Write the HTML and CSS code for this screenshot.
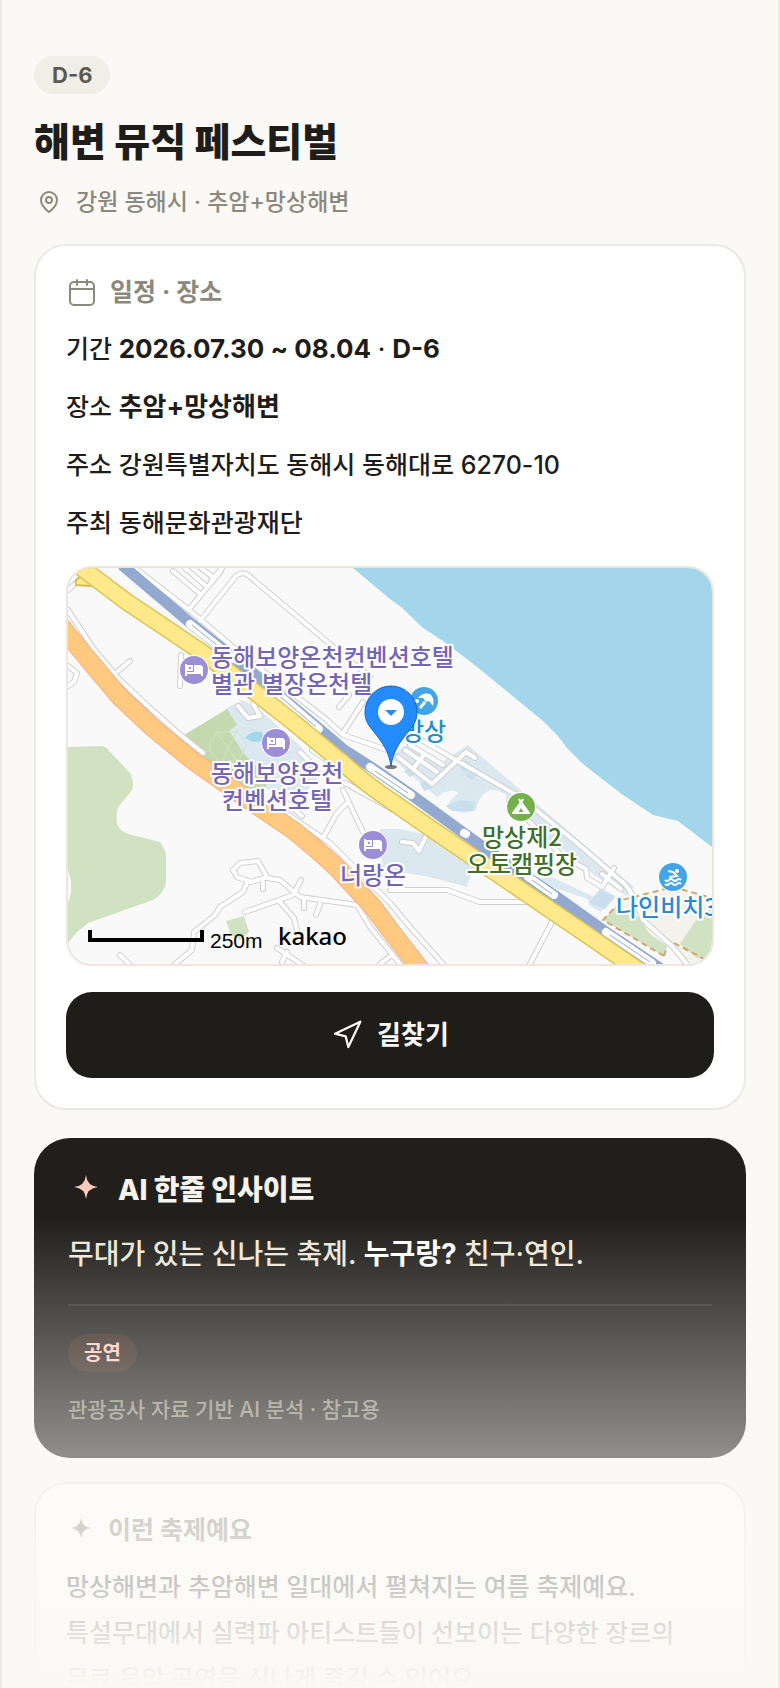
FILE: index.html
```html
<!DOCTYPE html>
<html lang="ko">
<head>
    <meta charset="UTF-8">
    <meta name="viewport" content="width=device-width, initial-scale=1.0">
    <title>해변 뮤직 페스티벌</title>
    <link rel="stylesheet" href="styles.css">
</head>
<body>

    <main class="page">
        <header class="intro">
            <span class="dday">D-6</span>
            <h1>해변 뮤직 페스티벌</h1>
            <p class="region">
                <svg class="icon-sm" viewBox="-3 -3 30 30" fill="none" stroke="currentColor" stroke-width="2">
                    <path d="M20 10c0 5-4.500 9.300-7.300 11.600a1 1 0 0 1-1.400 0C8.500 19.300 4 15 4 10a8 8 0 0 1 16 0z"/>
                    <circle cx="12" cy="10" r="3"/>
                </svg>
                강원 동해시 · 추암+망상해변
            </p>
        </header>

        <section class="card">
            <h2>
                <svg class="icon-md" viewBox="0 0 32 32" fill="none" stroke="currentColor" stroke-width="2" stroke-linecap="round">
                    <rect x="4" y="6" width="24" height="23" rx="4"/>
                    <path d="M4 13h24M11 4v5M21 4v5"/>
                </svg>
                일정 · 장소
            </h2>
            <ul class="facts">
                <li>기간 <b>2026.07.30 ~ 08.04</b> · <b>D-6</b></li>
                <li>장소 <b>추암+망상해변</b></li>
                <li>주소 강원특별자치도 동해시 동해대로 6270-10</li>
                <li>주최 동해문화관광재단</li>
            </ul>

            <div class="map">
                <svg viewBox="68 568 644 396" preserveAspectRatio="xMidYMid slice" role="img" aria-label="지도">
                    <rect x="68" y="568" width="644" height="396" fill="#f9f9f9"/>

                    <!-- sea -->
                    <path fill="#a3d6eb" d="M353 568L390 599 401 607 423 628 443 641 467 659 487 675 543 721 557 735 567 748 582 763 597 775 623 795 653 815 678 821 712 847V568z"/>

                    <!-- parks -->
                    <path fill="#d1e2c2" d="M68 747L102 746Q107 747 110 752L130 773Q135 781 132 790L119 806Q114 817 119 828 123 833 132 835L160 842 166 853V883Q162 896 153 900L88 923 77 932 68 943V903L71 893V880L68 870z"/>
                    <path fill="#d1e2c2" d="M226 921L244 916 249 932 240 940 231 935z"/>
                    <path fill="#dbe8f0" d="M225 709L243 700 262 712 300 746 322 772 300 800 268 790 228 732z"/>
                    <path fill="#c4d9ae" d="M184 735L227 709 237 725 229 731 245 755 268 778 264 796 235 782 205 758z"/>
                    <path fill="none" stroke="#d4e4c4" stroke-width="1" d="M210 742l7-9 20-2 10 14-8 14-18 4-11-12zM217 733l20 28M237 731l-16 32"/>
                    <path fill="#a3d6eb" d="M245 738Q251 730 262 732L265 741 253 742z"/>

                    <!-- camp ground and parking blocks -->
                    <path fill="#dbe8f0" d="M390 757L407 745 440 763 468 745 634 887 626 896 594 875 530 822 516 815 506 806V795Q495 787 486 792 478 798 476 810 465 816 449 809 444 804 459 793 450 787 437 797 424 801L388 776z"/>
                    <path fill="#c9dfed" d="M446 806L461 800 476 802 473 811 452 811zM458 764l9-4 6 8-9 5zM466 775l6-5 5 5-6 5zM404 771l8-4 6 6-8 4zM420 783l9-3 3 8-8 3z"/>
                    <path fill="#dbe8f0" d="M380 829L400 829 423 834 473 866 467 887 430 877 400 872 382 869z"/>
                    <path fill="#dbe8f0" d="M518 876L552 877 594 897 600 888 615 896 601 912 589 905 588 899 545 885z"/>
                    <path fill="#c9dfed" d="M594 896L602 889 615 897 605 909 590 903z"/>
                    <path fill="#f3f2ec" d="M617 905L673 889 712 899V964H690L650 930z"/>
                    <path fill="#d1e2c2" d="M603 920L616 906 638 917 650 934 667 946 664 956zM680 944L700 914 712 905V960L697 958z"/>
                    <path fill="none" stroke="#cba878" stroke-width="2" stroke-dasharray="6 4" d="M664 956L603 920 622 900 673 887 712 898M664 956l3-9M674 943L706 960"/>

                    <!-- small streets, grey casing first -->
                    <g fill="none" stroke="#cfcfcf" stroke-width="6" stroke-linecap="round" stroke-linejoin="round">
                        <path id="streets" d="M200 621L236 576Q242 571 248 575L337 650 370 677M135 568L193 613 240 653 327 720 343 735 390 751M343 733L363 702M339 707L349 695M68 590L82 578M180 686L181 655M118 671L130 661M173 571L200 594M185 568L206 586M201 568L214 578M211 581L222 568M191 607L221 571
                        M68 610L93 648 120 680 150 708 177 732 203 753M283 810L293 818 330 843 357 870 390 903 410 927 443 964
                        M68 666l9 7-3 9-6 4M238 706l10 12 12-2-7-12 14-2 14 12M300 752l10 10-8 12M312 750l18 12"/>
                        <path id="lanes" d="M343 790L363 832M345 783L392 809M347 803L337 813 323 838M288 804L302 816M233 870L240 863 258 861 267 877 251 882 237 877zM247 883L243 892 220 907 215 915 194 932 192 950 175 964M267 878L280 880 300 897 357 905 370 927 400 964M245 912L293 895 301 880M280 902L294 918 297 930M304 899v9M320 904l-4 11M263 882v7M120 955l10 10M277 948l30 20M287 952l-5 10M380 964l12-9
                        M390 890L447 890 480 902H533M553 920L530 964M402 842L413 843 419 851 427 834"/>
                        <path id="camproads" d="M423 741L520 797 577 843 620 880Q632 888 643 920L673 947 687 964M528 820L562 856 586 869 587 878 602 887 614 868M602 874L621 889M398 757L432 784 466 752 475 758M405 750L437 772M410 745L443 765M413 769L424 755"/>
                    </g>
                    <g fill="none" stroke="#fff" stroke-width="4" stroke-linecap="round" stroke-linejoin="round">
                        <path d="M200 621L236 576Q242 571 248 575L337 650 370 677M135 568L193 613 240 653 327 720 343 735 390 751M343 733L363 702M339 707L349 695M68 590L82 578M180 686L181 655M118 671L130 661M173 571L200 594M185 568L206 586M201 568L214 578M211 581L222 568M191 607L221 571
                        M68 610L93 648 120 680 150 708 177 732 203 753M283 810L293 818 330 843 357 870 390 903 410 927 443 964
                        M68 666l9 7-3 9-6 4M238 706l10 12 12-2-7-12 14-2 14 12M300 752l10 10-8 12M312 750l18 12"/>
                        <path d="M343 790L363 832M345 783L392 809M347 803L337 813 323 838M288 804L302 816M233 870L240 863 258 861 267 877 251 882 237 877zM247 883L243 892 220 907 215 915 194 932 192 950 175 964M267 878L280 880 300 897 357 905 370 927 400 964M245 912L293 895 301 880M280 902L294 918 297 930M304 899v9M320 904l-4 11M263 882v7M120 955l10 10M277 948l30 20M287 952l-5 10M380 964l12-9
                        M390 890L447 890 480 902H533M553 920L530 964M402 842L413 843 419 851 427 834"/>
                        <path d="M423 741L520 797 577 843 620 880Q632 888 643 920L673 947 687 964M528 820L562 856 586 869 587 878 602 887 614 868M602 874L621 889M398 757L432 784 466 752 475 758M405 750L437 772M410 745L443 765M413 769L424 755"/>
                    </g>

                    <!-- railway -->
                    <path fill="none" stroke="#94a9cf" stroke-width="11" d="M122 565L188 621 260 679 322 731 343 749 377 771 413 796 465 834 503 861 557 897 603 930 660 968"/>
                    <path fill="none" stroke="#fff" stroke-width="8" stroke-linecap="round" d="M190 624L234 659M272 689L319 729M370 767L411 795M464 833L466 834M528 877L554 895M606 932L652 963"/>
                    <path fill="none" stroke="#94a9cf" stroke-width="1" d="M192 625L234 659M276 693L316 727M375 771L408 793M532 880L552 894M610 935L650 962"/>

                    <!-- main roads -->
                    <path fill="#ffe98b" stroke="#d5c054" stroke-width="2" d="M94 577L80 577Q74 580 76 585L104 587"/>
                    <path fill="none" stroke="#d9c55a" stroke-width="18" stroke-linejoin="round" d="M74 562L127 602 157 622 203 653 247 686 293 722 345 765Q367 785 390 800L433 830 480 862 530 896 577 928 638 970"/>
                    <path fill="none" stroke="#ffe98b" stroke-width="15" stroke-linejoin="round" d="M74 562L127 602 157 622 203 653 247 686 293 722 345 765Q367 785 390 800L433 830 480 862 530 896 577 928 638 970"/>
                    <path fill="none" stroke="#f2ae88" stroke-width="19" stroke-linejoin="round" d="M58 622L68 635 93 665 120 697 153 728 192 760 243 796 293 830Q318 850 337 868L373 907 390 930 425 975"/>
                    <path fill="none" stroke="#ffc97f" stroke-width="17" stroke-linejoin="round" d="M58 622L68 635 93 665 120 697 153 728 192 760 243 796 293 830Q318 850 337 868L373 907 390 930 425 975"/>

                    <!-- places -->
                    <g id="hotel">
                        <circle cx="194" cy="670" r="15" fill="#fff"/>
                        <circle cx="194" cy="670" r="14" fill="#9b8dd6"/>
                        <path fill="none" stroke="#fff" stroke-width="2" d="M186 664V676M186 673H202M202 668V676M188 666h4v4h-4z"/>
                        <path fill="#fff" d="M194 665h7l2 2v6h-9z"/>
                    </g>
                    <use href="#hotel" x="82" y="73"/>
                    <use href="#hotel" x="179" y="175"/>

                    <circle cx="424" cy="701" r="15" fill="#fff"/>
                    <circle cx="424" cy="701" r="14" fill="#41a5e7"/>
                    <path fill="#fff" d="M418 698Q423 692 430 694 435 698 433 706L429 701 426 702 423 698z"/>
                    <path stroke="#fff" stroke-width="3" d="M425 702L420 708"/>
                    <circle cx="417" cy="701" r="2" fill="#fff"/>

                    <circle cx="521" cy="807" r="15" fill="#fff"/>
                    <circle cx="521" cy="807" r="14" fill="#74b04c"/>
                    <path fill="none" stroke="#fff" stroke-width="2" stroke-linejoin="round" d="M519 799L521 803 523 799M521 802L513 813H529z"/>
                    <path fill="#fff" fill-rule="evenodd" d="M521 802L530 814H512zM521 808L518 813H524z"/>

                    <circle cx="673" cy="877" r="15" fill="#fff"/>
                    <circle cx="673" cy="877" r="14" fill="#41a5e7"/>
                    <path fill="none" stroke="#fff" stroke-width="2" d="M668 871L673 872 677 876 669 877M665 880q2 2 4 0t4 0 4 0 4 0M665 884q2 2 4 0t4 0 4 0 4 0"/>
                    <circle cx="677" cy="871" r="2" fill="#fff"/>

                    <g class="place hotel">
                        <text x="211" y="666">동해보양온천컨벤션호텔</text>
                        <text x="211" y="693">별관 별장온천텔</text>
                        <text x="277" y="782" text-anchor="middle">동해보양온천</text>
                        <text x="277" y="809" text-anchor="middle">컨벤션호텔</text>
                        <text x="373" y="884" text-anchor="middle">너랑온</text>
                    </g>
                    <g class="place camp">
                        <text x="522" y="846" text-anchor="middle">망상제2</text>
                        <text x="522" y="873" text-anchor="middle">오토캠핑장</text>
                    </g>
                    <g class="place beach">
                        <text x="424" y="740" text-anchor="middle">망상</text>
                        <text x="616" y="916">나인비치3</text>
                    </g>

                    <!-- festival marker -->
                    <ellipse cx="391" cy="767" rx="6" ry="2" fill="#777"/>
                    <path fill="#238cfa" stroke="#1a62c4" stroke-width="1" d="M391 766C389 752 383 743 374 732 368 725 365 720 365 712A26 26 0 0 1 417 712C417 720 414 725 408 732 399 743 393 752 391 766z"/>
                    <circle cx="391" cy="712" r="13" fill="#fff"/>
                    <path fill="#238cfa" d="M385 710H397L391 716z"/>

                    <path fill="none" stroke="#000" stroke-width="4" d="M90 930V940H202V930"/>
                    <text class="scale" x="210" y="948">250m</text>
                    <text class="brand" x="278" y="945">kakao</text>
                </svg>
            </div>

            <button type="button" class="directions">
                <svg class="icon-md" viewBox="0 0 24 24" fill="none" stroke="currentColor" stroke-width="1.700" stroke-linejoin="round">
                    <path d="M3 11L22 2 13 21 11 13z"/>
                </svg>
                길찾기
            </button>
        </section>

        <section class="insight">
            <h2>
                <svg class="icon-lg" viewBox="0 0 36 36" fill="currentColor">
                    <path d="M18 3Q19 14 30 15 19 16 18 27 17 16 6 15 17 14 18 3z"/>
                </svg>
                AI 한줄 인사이트
            </h2>
            <p class="summary">무대가 있는 신나는 축제. <b>누구랑?</b> 친구·연인.</p>
            <div class="tags">
                <span class="tag">공연</span>
            </div>
            <p class="source">관광공사 자료 기반 AI 분석 · 참고용</p>
        </section>

        <section class="card">
            <h2>
                <svg class="icon-sm" viewBox="0 0 30 30" fill="currentColor">
                    <path d="M15 3Q16 12 25 13 16 14 15 23 14 14 5 13 14 12 15 3z"/>
                </svg>
                이런 축제예요
            </h2>
            <p class="about">망상해변과 추암해변 일대에서 펼쳐지는 여름 축제예요. 특설무대에서 실력파 아티스트들이 선보이는 다양한 장르의 무료 음악 공연을 신나게 즐길 수 있어요.</p>
        </section>

        <div class="fade"></div>
    </main>

</body>
</html>
```

FILE: styles.css
```css
* {
    box-sizing: border-box;
    margin: 0;
    padding: 0;
}

body {
    font-family: Inter, "Noto Sans CJK KR", sans-serif;
    font-size: 25px;
    font-weight: 500;
    color: #1e1d19;
    background: #faf9f5;
    word-break: keep-all;
}

b {
    font-size: 26px;
    font-weight: 700;
}

.page {
    position: relative;
    height: 100vh;
    overflow: hidden;
    padding: 56px 32px 0;
    border-left: 2px solid #ebe9e3;
    border-right: 2px solid #ebe9e3;
}

.intro {
    display: flex;
    flex-direction: column;
    align-items: flex-start;
    margin-bottom: 24px;
}

.dday {
    padding: 0 18px;
    border-radius: 19px;
    background: #f0eee7;
    color: #5c5a50;
    font-size: 22px;
    font-weight: 700;
    line-height: 38px;
}

h1 {
    margin-top: 20px;
    font-size: 39px;
    font-weight: 800;
    line-height: 56px;
}

.region {
    display: flex;
    align-items: center;
    gap: 12px;
    margin-top: 14px;
    color: #8c887c;
    font-size: 23px;
    line-height: 36px;
}

.icon-sm {
    width: 30px;
    height: 30px;
}

.icon-md {
    width: 32px;
    height: 32px;
}

.icon-lg {
    width: 36px;
    height: 36px;
}

.card {
    padding: 28px 30px 30px;
    border: 2px solid #ebe9e3;
    border-radius: 32px;
    background: #fff;
}

.card h2 {
    display: flex;
    align-items: center;
    gap: 12px;
    color: #8c887c;
    font-size: 25px;
    font-weight: 700;
    line-height: 36px;
}

.facts {
    display: flex;
    flex-direction: column;
    gap: 16px;
    margin-top: 18px;
    list-style: none;
    line-height: 42px;
}

.map {
    margin-top: 22px;
    border: 2px solid #ebe7df;
    border-radius: 26px;
    overflow: hidden;
}

.map svg {
    display: block;
    width: 100%;
}

.place {
    font-family: "Noto Sans CJK KR", sans-serif;
    font-size: 24px;
    font-weight: 500;
    stroke: #fff;
    stroke-width: 4px;
    stroke-linejoin: round;
    paint-order: stroke;
}

.hotel {
    fill: #7566b5;
}

.camp {
    fill: #41702a;
}

.beach {
    fill: #2a8ccb;
}

.scale {
    font-family: "Liberation Sans", sans-serif;
    font-size: 21px;
    font-weight: 400;
}

.brand {
    font-family: "Noto Sans", sans-serif;
    font-size: 24px;
    font-weight: 500;
}

.directions {
    display: flex;
    align-items: center;
    justify-content: center;
    gap: 14px;
    width: 100%;
    height: 86px;
    margin-top: 26px;
    border: none;
    border-radius: 26px;
    background: #1e1d19;
    color: #faf9f5;
    font-family: inherit;
    font-size: 26px;
    font-weight: 700;
    line-height: 32px;
    cursor: pointer;
}

.insight {
    margin: 28px 0 24px;
    padding: 34px;
    border-radius: 36px;
    background: #201f1b;
}

.insight h2 {
    display: flex;
    align-items: center;
    gap: 14px;
    color: #f5f3ec;
    font-size: 28px;
    font-weight: 800;
    line-height: 36px;
}

.insight h2 svg {
    color: #ffcbbb;
}

.summary {
    margin-top: 24px;
    color: #ece8db;
    font-size: 28px;
    line-height: 44px;
}

.summary b {
    color: #fff;
    font-size: 28px;
}

.tags {
    display: flex;
    margin-top: 28px;
    padding-top: 28px;
    border-top: 2px solid #33322e;
}

.tag {
    padding: 0 16px;
    border-radius: 19px;
    background: #36261f;
    color: #ffcbbb;
    font-size: 20px;
    font-weight: 700;
    line-height: 38px;
}

.source {
    margin-top: 24px;
    color: #8c887c;
    font-size: 21px;
    line-height: 28px;
}

.about {
    margin-top: 16px;
    line-height: 46px;
}

/* fades the rest of the page out */
.fade {
    position: absolute;
    right: 0;
    bottom: 0;
    left: 0;
    height: 472px;
    background: linear-gradient(rgba(250, 249, 245, 0), #faf9f5);
    pointer-events: none;
}
```
